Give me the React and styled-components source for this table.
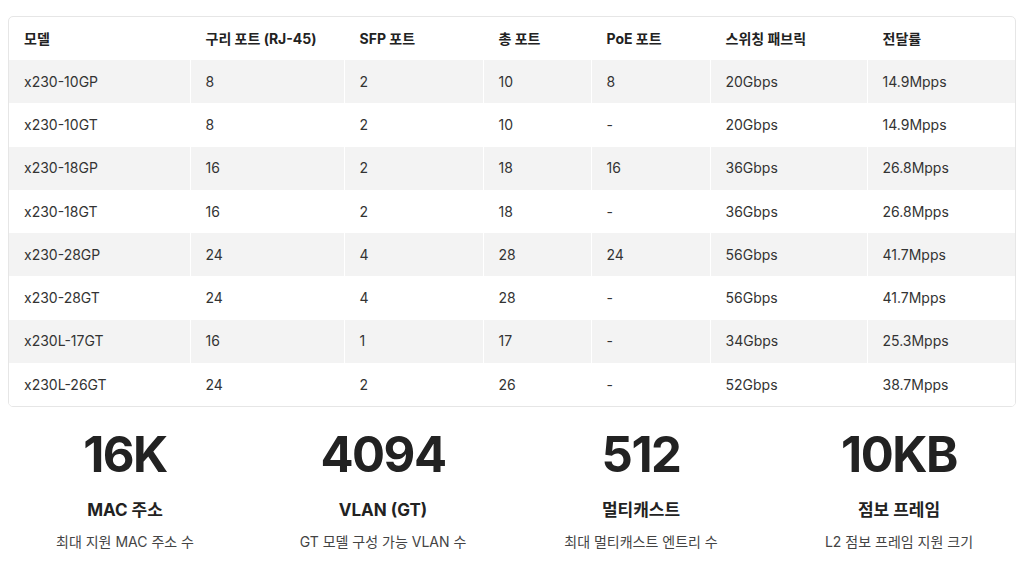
import React from "react";
import styled, { createGlobalStyle } from "styled-components";

const GlobalStyle = createGlobalStyle`
  body {
    margin: 0;
    background: #ffffff;
    font-family: Inter, "Noto Sans CJK KR", sans-serif;
    color: #222;
  }
`;

const Page = styled.div`
  padding: 16px 8px 0 8px;
`;

const Card = styled.div`
  border: 1px solid #e6e6e6;
  border-radius: 5px;
  overflow: hidden;
`;

const Table = styled.table`
  width: 100%;
  border-collapse: collapse;
  table-layout: fixed;
`;

const Th = styled.th`
  text-align: left;
  font-size: 14px;
  line-height: 20px;
  font-weight: 700;
  color: #222;
  height: 43px;
  padding: 0 15px;
  border-right: 1px solid #fff;
`;

const Row = styled.tr`
  background: ${(p) => (p.$shade ? "#f3f3f3" : "#ffffff")};
`;

const Td = styled.td`
  font-size: 14px;
  line-height: 20px;
  color: #333;
  height: 43.3px;
  padding: 0 15px;
  border-right: 1px solid #fff;
  &:last-child {
    border-right: none;
  }
`;

const Stats = styled.div`
  display: grid;
  grid-template-columns: repeat(4, 1fr);
  gap: 24px;
  padding-top: 18px;
`;

const Stat = styled.div`
  display: flex;
  flex-direction: column;
  align-items: center;
`;

const Value = styled.div`
  font-size: 49px;
  font-weight: 700;
  letter-spacing: -1.5px;
  color: #222;
  line-height: 60px;
`;

const Label = styled.div`
  margin-top: 14px;
  font-size: 17px;
  line-height: 22px;
  font-weight: 700;
  color: #222;
`;

const Desc = styled.div`
  margin-top: 11px;
  font-size: 14px;
  line-height: 20px;
  color: #444;
`;

const widths = [181, 154, 139, 108, 119, 157, 149];
const headers = ["모델", "구리 포트 (RJ-45)", "SFP 포트", "총 포트", "PoE 포트", "스위칭 패브릭", "전달률"];

const rows = [
  ["x230-10GP", "8", "2", "10", "8", "20Gbps", "14.9Mpps"],
  ["x230-10GT", "8", "2", "10", "-", "20Gbps", "14.9Mpps"],
  ["x230-18GP", "16", "2", "18", "16", "36Gbps", "26.8Mpps"],
  ["x230-18GT", "16", "2", "18", "-", "36Gbps", "26.8Mpps"],
  ["x230-28GP", "24", "4", "28", "24", "56Gbps", "41.7Mpps"],
  ["x230-28GT", "24", "4", "28", "-", "56Gbps", "41.7Mpps"],
  ["x230L-17GT", "16", "1", "17", "-", "34Gbps", "25.3Mpps"],
  ["x230L-26GT", "24", "2", "26", "-", "52Gbps", "38.7Mpps"],
];

const stats = [
  { value: "16K", label: "MAC 주소", desc: "최대 지원 MAC 주소 수" },
  { value: "4094", label: "VLAN (GT)", desc: "GT 모델 구성 가능 VLAN 수" },
  { value: "512", label: "멀티캐스트", desc: "최대 멀티캐스트 엔트리 수" },
  { value: "10KB", label: "점보 프레임", desc: "L2 점보 프레임 지원 크기" },
];

const App = () => {
  return (
    <Page>
      <GlobalStyle />
      <Card>
        <Table>
          <colgroup>
            {widths.map((w, i) => (
              <col key={i} style={{ width: w }} />
            ))}
          </colgroup>
          <thead>
            <tr>
              {headers.map((h) => (
                <Th key={h}>{h}</Th>
              ))}
            </tr>
          </thead>
          <tbody>
            {rows.map((r, i) => (
              <Row key={r[0]} $shade={i % 2 === 0}>
                {r.map((c, j) => (
                  <Td key={j}>{c}</Td>
                ))}
              </Row>
            ))}
          </tbody>
        </Table>
      </Card>
      <Stats>
        {stats.map((s) => (
          <Stat key={s.value}>
            <Value>{s.value}</Value>
            <Label>{s.label}</Label>
            <Desc>{s.desc}</Desc>
          </Stat>
        ))}
      </Stats>
    </Page>
  );
};

export default App;
